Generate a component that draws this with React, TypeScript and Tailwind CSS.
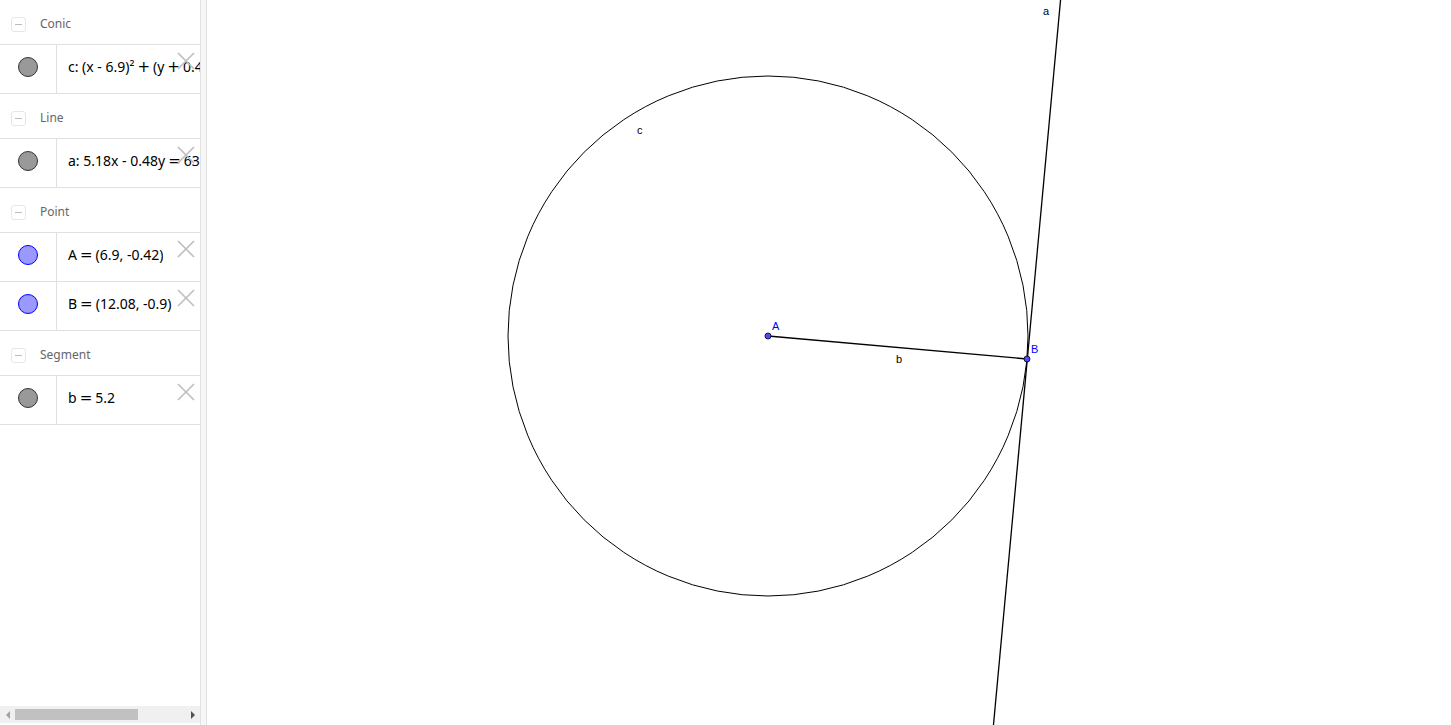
import React from 'react';

type Item = { color: 'gray' | 'blue'; text: React.ReactNode };
type Group = { name: string; items: Item[] };

const Op = ({ c }: { c: string }) => (
  <span className="text-[15px] leading-none px-[3px]" style={{ fontFamily: "'DejaVu Sans', sans-serif" }}>
    {c}
  </span>
);

const groups: Group[] = [
  {
    name: 'Conic',
    items: [
      {
        color: 'gray',
        text: (
          <>
            c: (x - 6.9)²<Op c="+" />(y<Op c="+" />0.42)²<Op c="=" />27.04
          </>
        ),
      },
    ],
  },
  {
    name: 'Line',
    items: [
      {
        color: 'gray',
        text: (
          <>
            a: 5.18x - 0.48y<Op c="=" />63.01
          </>
        ),
      },
    ],
  },
  {
    name: 'Point',
    items: [
      {
        color: 'blue',
        text: (
          <>
            A<Op c="=" />(6.9, -0.42)
          </>
        ),
      },
      {
        color: 'blue',
        text: (
          <>
            B<Op c="=" />(12.08, -0.9)
          </>
        ),
      },
    ],
  },
  {
    name: 'Segment',
    items: [
      {
        color: 'gray',
        text: (
          <>
            b<Op c="=" />5.2
          </>
        ),
      },
    ],
  },
];

const CloseIcon = () => (
  <svg width="18" height="18" viewBox="0 0 18 18" className="block">
    <path d="M1 1 L17 17 M17 1 L1 17" stroke="#bdbdbd" strokeWidth="1.6" fill="none" />
  </svg>
);

const GroupHeader = ({ name }: { name: string }) => (
  <div className="h-[45px] pt-[4px] flex items-center border-b border-[#e0e0e0]">
    <div className="ml-[11px] w-[15px] h-[15px] rounded-[3px] border border-[#e6e6e6] flex items-center justify-center">
      <div className="w-[7px] h-px bg-[#bbb]" />
    </div>
    <span className="ml-[14px] text-[12px] text-[#666]">{name}</span>
  </div>
);

const Row = ({ item }: { item: Item }) => (
  <div className="relative h-[49px] flex border-b border-[#e0e0e0]">
    <div className="w-[57px] shrink-0 flex items-center justify-center pb-[4px] border-r border-[#e0e0e0]">
      <div
        className={
          item.color === 'blue'
            ? 'w-[20px] h-[20px] rounded-full bg-[#9999ff] border border-[#0000ff]'
            : 'w-[20px] h-[20px] rounded-full bg-[#999999] border border-[#333333]'
        }
      />
    </div>
    <div className="flex items-center pl-[11px] pb-[5px] whitespace-nowrap text-[14px] text-black overflow-hidden">
      <span>{item.text}</span>
    </div>
    <div className="absolute left-[177px] top-[7px]">
      <CloseIcon />
    </div>
  </div>
);

const Scrollbar = () => (
  <div className="h-[17px] bg-[#f0f0f0] flex items-center">
    <div className="w-[15px] flex items-center justify-center">
      <div className="w-0 h-0 border-y-[4px] border-y-transparent border-r-[4px] border-r-[#a3a3a3]" />
    </div>
    <div className="w-[123px] h-[11px] bg-[#c1c1c1]" />
    <div className="flex-1" />
    <div className="w-[15px] flex items-center justify-center">
      <div className="w-0 h-0 border-y-[4px] border-y-transparent border-l-[4px] border-l-[#505050]" />
    </div>
  </div>
);

const Canvas = () => (
  <div className="flex-1 relative overflow-hidden bg-white">
    <svg className="absolute inset-0 w-full h-full" viewBox="207 0 1244 725" preserveAspectRatio="xMinYMin meet">
      <circle cx="768" cy="336" r="260" fill="none" stroke="#000" strokeWidth="1" />
      <line x1="1061" y1="-5" x2="993" y2="730" stroke="#000" strokeWidth="1.3" />
      <line x1="768" y1="336" x2="1027" y2="359" stroke="#000" strokeWidth="1.3" />
      <circle cx="768" cy="336" r="3" fill="#4d4dff" stroke="#000" strokeWidth="0.8" />
      <circle cx="1027" cy="359" r="3" fill="#4d4dff" stroke="#000" strokeWidth="0.8" />
      <g fontFamily="'Liberation Sans', Arial, sans-serif" fontSize="11">
        <text x="772" y="330" fill="#0000ff">A</text>
        <text x="1031" y="353" fill="#0000ff">B</text>
        <text x="896" y="363" fill="#000">b</text>
        <text x="637" y="134" fill="#000">c</text>
        <text x="1043" y="15" fill="#000">a</text>
      </g>
    </svg>
  </div>
);

export default function App() {
  return (
    <div className="w-[1451px] h-[725px] flex bg-white overflow-hidden" style={{ fontFamily: "'Noto Sans', 'DejaVu Sans', sans-serif" }}>
      <div className="w-[200px] shrink-0 flex flex-col">
        <div className="flex-1 overflow-hidden">
          {groups.map((g) => (
            <div key={g.name}>
              <GroupHeader name={g.name} />
              {g.items.map((it, i) => (
                <Row key={i} item={it} />
              ))}
            </div>
          ))}
        </div>
        <div className="h-[6px]" />
        <Scrollbar />
        <div className="h-[2px]" />
      </div>
      <div className="w-[7px] shrink-0 bg-[#f7f7f7] border-x border-[#e3e3e3]" />
      <Canvas />
    </div>
  );
}
